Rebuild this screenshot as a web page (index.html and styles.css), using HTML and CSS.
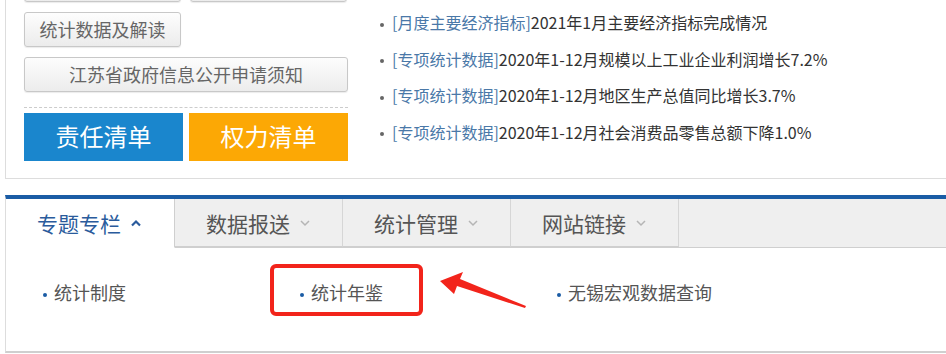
FILE: index.html
```html
<!DOCTYPE html>
<html><head><meta charset="UTF-8">
<link rel="stylesheet" href="styles.css">
</head>
<body>

<div class="toppanel">
    <div class="leftcol">
        <div class="btnrow cutrow">
            <a class="greybtn"></a>
            <a class="greybtn"></a>
        </div>
        <div class="btnrow">
            <a class="greybtn">统计数据及解读</a>
        </div>
        <div class="btnrow">
            <a class="greybtn wide">江苏省政府信息公开申请须知</a>
        </div>
        <div class="dashline"></div>
        <div class="btnrow bigrow">
            <a class="bigbtn blue">责任清单</a>
            <a class="bigbtn orange">权力清单</a>
        </div>
    </div>

    <ul class="newslist">
        <li><span class="cat">[月度主要经济指标]</span>2021年1月主要经济指标完成情况</li>
        <li><span class="cat">[专项统计数据]</span>2020年1-12月规模以上工业企业利润增长7.2%</li>
        <li><span class="cat">[专项统计数据]</span>2020年1-12月地区生产总值同比增长3.7%</li>
        <li><span class="cat">[专项统计数据]</span>2020年1-12月社会消费品零售总额下降1.0%</li>
    </ul>
</div>

<div class="tabbox">
    <div class="tabbar">
        <div class="tab active">专题专栏
            <svg class="chev" width="12" height="8" viewBox="0 0 12 8"><polyline points="2,6.5 6,2.5 10,6.5" fill="none" stroke="#2a5b9c" stroke-width="2.2"/></svg>
        </div>
        <div class="tab">数据报送
            <svg class="chev" width="12" height="8" viewBox="0 0 12 8"><polyline points="2,2 6,6 10,2" fill="none" stroke="#b5b5b5" stroke-width="1.5"/></svg>
        </div>
        <div class="tab">统计管理
            <svg class="chev" width="12" height="8" viewBox="0 0 12 8"><polyline points="2,2 6,6 10,2" fill="none" stroke="#b5b5b5" stroke-width="1.5"/></svg>
        </div>
        <div class="tab">网站链接
            <svg class="chev" width="12" height="8" viewBox="0 0 12 8"><polyline points="2,2 6,6 10,2" fill="none" stroke="#b5b5b5" stroke-width="1.5"/></svg>
        </div>
    </div>
    <div class="tabcontent">
        <div class="item">统计制度</div>
        <div class="item marked">统计年鉴</div>
        <div class="item">无锡宏观数据查询</div>

        <svg class="arrow" width="100" height="40" viewBox="0 0 100 40">
            <polygon points="1,9 24,0 21,7 87,34 86,36 18,14 15,22" fill="#f2241b"/>
        </svg>
    </div>
</div>

</body></html>
```

FILE: styles.css
```css
body {
margin: 0;
padding: 0;
background-color: #fff;
font-family: "Noto Sans CJK SC", sans-serif;
overflow: hidden;
}

/* top panel */
.toppanel {
margin-left: 5px;
height: 178px;
border-left: 1px solid #ddd;
border-bottom: 1px solid #ddd;
display: flex;
}

.leftcol {
padding-left: 18px;
width: 324px;
}

.btnrow {
display: flex;
gap: 9px;
margin-top: 10px;
}

.cutrow {
margin-top: -33px;
}

.greybtn {
display: block;
box-sizing: border-box;
width: 157px;
height: 35px;
line-height: 32px;
text-align: center;
font-size: 18px;
color: #666;
border: 1px solid #c8c8c8;
border-radius: 3px;
background: linear-gradient(#fdfdfd, #ececec);
box-shadow: 0 1px 1px rgba(0,0,0,0.08);
}

.greybtn.wide {
width: 324px;
}

.dashline {
margin-top: 15px;
border-top: 1px dashed #ccc;
}

.bigrow {
margin-top: 5px;
gap: 6px;
}

.bigbtn {
display: block;
width: 159px;
height: 48px;
line-height: 46px;
text-align: center;
font-size: 24px;
color: #fff;
}

.blue {
background-color: #1a86cd;
}

.orange {
background-color: #fca805;
}

.newslist {
list-style: none;
margin: 0;
padding: 4px 0 0 32px;
font-size: 16px;
line-height: 36.5px;
color: #333;
}

.newslist li::before {
content: "";
display: inline-block;
width: 4px;
height: 4px;
border-radius: 2px;
background-color: #666;
margin-right: 8px;
vertical-align: middle;
}

.cat {
color: #4a78a8;
}

/* bottom tab box */
.tabbox {
margin-top: 16px;
margin-left: 5px;
border-left: 1px solid #ddd;
border-top: 4px solid #1a5ca5;
border-bottom: 2px solid #cfcfcf;
}

.tabbar {
display: flex;
height: 48px;
background-color: #efefef;
border-bottom: 1px solid #cfcfcf;
}

.tab {
box-sizing: border-box;
width: 168px;
padding-left: 31px;
line-height: 48px;
font-size: 21px;
color: #555;
border-right: 1px solid #d6d6d6;
border-bottom: 1px solid #cfcfcf;
display: flex;
align-items: center;
gap: 9px;
}

.tab.active {
width: 169px;
color: #2a5b9c;
background-color: #fff;
border-bottom: 1px solid #fff;
border-right: 1px solid #cfcfcf;
height: 49px;
}

.chev {
display: block;
}

.tabcontent {
position: relative;
display: flex;
height: 103px;
padding-left: 37px;
box-sizing: border-box;
padding-top: 32px;
}

.item {
width: 257px;
font-size: 18px;
line-height: 24px;
height: 24px;
color: #555;
}

.item::before {
content: "";
display: inline-block;
width: 4px;
height: 4px;
background-color: #1a5ca5;
border-radius: 2px;
margin-right: 7px;
vertical-align: middle;
}

.marked {
position: relative;
}

.marked::after {
content: "";
position: absolute;
left: -30px;
top: -16px;
width: 145px;
height: 44px;
border: 4px solid #f2241b;
border-radius: 6px;
}

.arrow {
position: absolute;
left: 433px;
top: 24px;
}
```
